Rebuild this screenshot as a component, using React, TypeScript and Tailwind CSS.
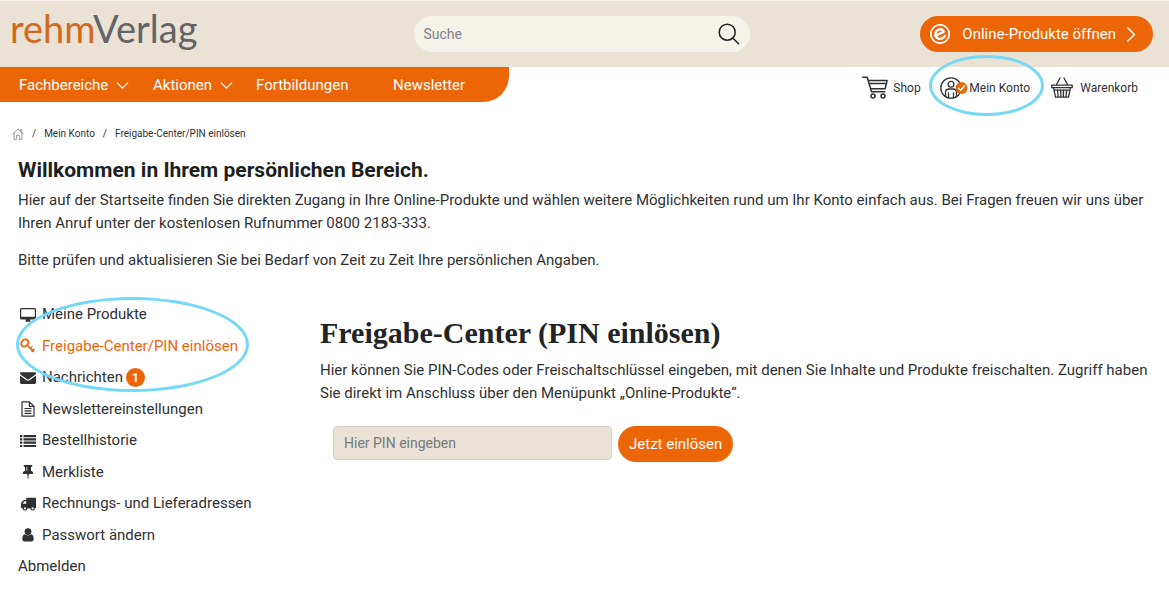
import type { ReactNode } from 'react';

const Chevron = ({ className }: { className: string }) => (
  <svg viewBox="0 0 14 8" className={className} fill="none" stroke="currentColor" strokeWidth="1.4" strokeLinecap="round" strokeLinejoin="round" aria-hidden="true">
    <path d="M1 1l6 6 6-6" />
  </svg>
);

const HomeIcon = () => (
  <svg viewBox="0 0 12 12" className="size-3 text-[#8a8f94]" fill="none" stroke="currentColor" strokeWidth="0.9" strokeLinejoin="round" strokeLinecap="round" aria-hidden="true">
    <path d="M.8 6L6 .9 11.200 6M2.100 5v6.400h2.500V7.500h2.800v3.900h2.500V5M8.800 3.300V1.500h1.100v2.800" />
  </svg>
);

const SearchIcon = () => (
  <svg viewBox="0 0 22 22" className="size-[22px]" fill="none" stroke="currentColor" strokeWidth="1.500" strokeLinecap="round" aria-hidden="true">
    <circle cx="9.200" cy="9.200" r="8" />
    <path d="M14.900 15.200l5.800 5.500" />
  </svg>
);

const EbookIcon = () => (
  <svg viewBox="0 0 20 20" className="size-5" aria-hidden="true">
    <circle cx="10" cy="10" r="9.200" fill="none" stroke="#fff" strokeWidth="1.700" />
    <path d="M5.200 11.900L13.900 7.700C12.900 5.700 10.700 4.800 8.500 5.600 5.900 6.600 4.700 9.400 5.700 12c1.100 2.500 3.900 3.500 6.400 2.400 1.300-.6 2.300-1.500 2.900-2.600" fill="none" stroke="#fff" strokeWidth="2.300" strokeLinecap="round" strokeLinejoin="round" />
  </svg>
);

const CartIcon = () => (
  <svg viewBox="0 0 26 23" className="h-[23px] w-[26px]" fill="none" stroke="currentColor" strokeWidth="1.500" strokeLinejoin="round" strokeLinecap="round" aria-hidden="true">
    <path d="M.8 1.200h4.400l4.300 14.500h13.300M6.200 4.600h18.900l-2 8.200H8.600M6.900 7.600h17.400" />
    <circle cx="11" cy="20" r="2" />
    <circle cx="21" cy="20" r="2" />
  </svg>
);

const AccountIcon = () => (
  <svg viewBox="0 0 28 22" className="h-[22px] w-7" fill="none" stroke="currentColor" strokeWidth="1.300" strokeLinecap="round" strokeLinejoin="round" aria-hidden="true">
    <circle cx="11" cy="11" r="10.200" />
    <circle cx="11" cy="7.300" r="2.900" />
    <path d="M5.500 19.200v-3.700c0-2 1.600-3.500 3.500-3.500h4c2 0 3.500 1.500 3.500 3.500v3.700M8.500 20.500v-4.700M13.500 20.500v-4.700" />
    <circle cx="21.500" cy="11" r="6" fill="#ec6608" stroke="none" />
    <path d="M18.700 11.200l2 2 3.700-4.300" stroke="#fff" strokeWidth="1.500" />
  </svg>
);

const BasketIcon = () => (
  <svg viewBox="0 0 22 21" className="h-[21px] w-[22px]" fill="none" stroke="currentColor" strokeWidth="1.300" strokeLinejoin="round" strokeLinecap="round" aria-hidden="true">
    <path d="M.8 8.200h20.400v2.500H.8zM2.500 10.700l2 9.500h13l2-9.500M5.300 8L9 1M16.700 8L13 1M6.500 13l.7 7M9.700 13l.2 7M12.500 13l-.2 7M15.600 13l-.7 7M3.200 13.200h15.700" />
  </svg>
);

const MenuSvg = ({ children }: { children: ReactNode }) => (
  <svg viewBox="0 0 16 16" className="size-4 shrink-0" fill="currentColor" aria-hidden="true">
    {children}
  </svg>
);

const desktop = (
  <MenuSvg>
    <path fillRule="evenodd" d="M1.300 1h13.400A1.300 1.300 0 0116 2.300v9a1.300 1.300 0 01-1.300 1.300H10c0 .7.500 1.100.5 1.600 0 .4-.3.600-.6.600H6c-.3 0-.6-.2-.6-.6 0-.5.500-.9.500-1.600H1.300A1.300 1.300 0 010 11.300v-9A1.300 1.300 0 011.300 1zM1.200 2.200v7.600h13.600V2.200z" />
  </MenuSvg>
);
const key = (
  <MenuSvg>
    <g fill="none" stroke="currentColor" strokeLinecap="round">
      <ellipse cx="4.800" cy="5" rx="3.900" ry="3.100" transform="rotate(-40 4.800 5)" strokeWidth="1.900" />
      <path d="M7.500 7.500l5.800 6M11.800 9.200l-1.500 1.500M14 11.300l-1.900 1.900" strokeWidth="1.700" />
    </g>
  </MenuSvg>
);
const mail = (
  <MenuSvg>
    <path d="M.8 2.300h14.400c.5 0 .8.300.8.800 0 .9-.7 1.700-1.500 2.200L9.200 9c-.8.500-1.600.5-2.400 0L1.500 5.300C.7 4.800 0 4 0 3.100c0-.5.300-.8.800-.8z" />
    <path d="M0 5.600l6 4.300c1.300.9 2.700.9 4 0l6-4.300v6.900c0 .8-.6 1.400-1.400 1.400H1.400c-.8 0-1.400-.6-1.400-1.400z" />
  </MenuSvg>
);
const file = (
  <MenuSvg>
    <g fill="none" stroke="currentColor" strokeWidth="1.200" strokeLinejoin="round">
      <path d="M2 .8h7.500L14 5.300v9.900H2zM9.400.8v4.600H14" />
      <path d="M4.500 7.500h7M4.500 9.900h7M4.500 12.300h7" />
    </g>
  </MenuSvg>
);
const list = (
  <MenuSvg>
    <path d="M0 2h2.300v2.200H0zM3.500 2H16v2.200H3.500zM0 5.300h2.300v2.200H0zM3.500 5.300H16v2.200H3.500zM0 8.600h2.300v2.200H0zM3.500 8.600H16v2.200H3.500zM0 11.900h2.300v2.200H0zM3.500 11.900H16v2.200H3.500z" />
  </MenuSvg>
);
const pin = (
  <MenuSvg>
    <path d="M4.600 1h6.800c.6 0 1 .4 1 .9s-.4.900-1 .9H11v4c1.400.5 2.200 1.500 2.200 2.700 0 .3-.2.500-.5.500H8.800L8.300 15h-.5L7.300 10h-4c-.3 0-.5-.2-.5-.5 0-1.200.8-2.200 2.200-2.700v-4h-.4c-.6 0-1-.4-1-.9s.4-.9 1-.9zM6.500 3v4h.7V3z" fillRule="evenodd" />
  </MenuSvg>
);
const truck = (
  <MenuSvg>
    <path fillRule="evenodd" d="M6.900 1.800h8.300c.5 0 .8.300.8.700v9.100c0 .5-.4.800-1.200.8a2.200 2.200 0 01-4.400 0H7.200a2.200 2.200 0 01-4.400 0C1.500 12.400 1 12 1 11.500V7.700c0-.5.200-1 .5-1.400l1.700-1.700c.4-.4.800-.6 1.400-.6h1.600V2.500c0-.4.300-.7.700-.7zM2.500 7.700h3.700V5.300H4.600zM5 11.300a1.100 1.100 0 100 2.200 1.100 1.100 0 000-2.200zM12.600 11.300a1.100 1.100 0 100 2.200 1.100 1.100 0 000-2.200z" />
  </MenuSvg>
);
const user = (
  <MenuSvg>
    <circle cx="8" cy="4.600" r="3.400" />
    <path d="M4.900 7.300c1.900 1.500 4.300 1.500 6.200 0 2 .3 2.600 2.500 2.600 4.600 0 1.500-.9 2.500-2.200 2.500h-7c-1.300 0-2.200-1-2.200-2.500 0-2.100.6-4.300 2.600-4.600z" />
  </MenuSvg>
);

type Entry = { label: string; icon?: ReactNode; active?: boolean; badge?: number };

const entries: Entry[] = [
  { label: 'Meine Produkte', icon: desktop },
  { label: 'Freigabe-Center/PIN einlösen', icon: key, active: true },
  { label: 'Nachrichten', icon: mail, badge: 1 },
  { label: 'Newslettereinstellungen', icon: file },
  { label: 'Bestellhistorie', icon: list },
  { label: 'Merkliste', icon: pin },
  { label: 'Rechnungs- und Lieferadressen', icon: truck },
  { label: 'Passwort ändern', icon: user },
  { label: 'Abmelden' },
];

export default function App() {
  return (
    <div className="min-h-screen bg-white font-['Roboto',sans-serif] text-[15px] leading-[23px] text-[#2f3133]">
      <header>
        <div className="grid h-[67px] grid-cols-[1fr_336px_1fr] items-center border-t border-[#f4f1ea] bg-[#e9e2d5] pr-4 pl-[10px]">
          <a href="#start" className="pb-3 font-['Lato',sans-serif] text-[38px] leading-[48px] text-[#636466]">
            <span className="text-[#d2691e]">rehm</span>Verlag
          </a>
          <form className="flex h-9 items-center rounded-full bg-[#f5f2ea] pr-[10px]" role="search">
            <input type="search" aria-label="Suche" placeholder="Suche" className="h-full min-w-0 flex-1 rounded-full bg-transparent px-[10px] text-sm outline-none placeholder:text-[#7d8286]" />
            <button type="button" aria-label="Suchen" className="text-[#222]">
              <SearchIcon />
            </button>
          </form>
          <a href="#produkte" className="flex h-9 items-center justify-self-end rounded-full bg-[#ec6608] pr-[14px] pl-[10px] text-white">
            <EbookIcon />
            <span className="pr-[7px] pl-3">Online-Produkte öffnen</span>
            <Chevron className="h-[9px] w-4 -rotate-90" />
          </a>
        </div>
        <div className="flex justify-between">
          <nav aria-label="Hauptmenü" className="flex h-[35px] w-[509px] items-center rounded-br-[26px] bg-[#ec6608] pt-[2px] pl-[19px] text-white">
            <button type="button" className="flex w-[134px] items-center gap-2">
              Fachbereiche
              <Chevron className="h-[7px] w-[13px]" />
            </button>
            <button type="button" className="flex w-[103px] items-center gap-2">
              Aktionen
              <Chevron className="h-[7px] w-[13px]" />
            </button>
            <a href="#fortbildungen" className="w-[137px]">Fortbildungen</a>
            <a href="#newsletter">Newsletter</a>
          </nav>
          <nav aria-label="Konto" className="flex items-center pt-[6px] pr-[31px] text-xs">
            <a href="#shop" className="flex w-[78px] items-center gap-[5px]">
              <CartIcon />
              Shop
            </a>
            <a href="#konto" className="relative flex w-[111px] items-center gap-[1px]">
              <AccountIcon />
              Mein Konto
              <span className="pointer-events-none absolute -top-[22px] -left-[11px] h-[61px] w-[115px] rounded-[50%] border-3 border-[#74d8f7]" />
            </a>
            <a href="#warenkorb" className="flex items-center gap-[7px]">
              <BasketIcon />
              Warenkorb
            </a>
          </nav>
        </div>
      </header>

      <main className="px-[18px]">
        <nav aria-label="Brotkrumen" className="-ml-[6px] flex items-center gap-2 pt-5 text-[10px]">
          <a href="#start" aria-label="Startseite"><HomeIcon /></a>
          <span>/</span>
          <a href="#konto">Mein Konto</a>
          <span>/</span>
          <span>Freigabe-Center/PIN einlösen</span>
        </nav>

        <h1 className="pt-[11px] text-[21px] leading-7 font-bold text-[#1d1f20]">Willkommen in Ihrem persönlichen Bereich.</h1>
        <p className="pt-[5px]">
          Hier auf der Startseite finden Sie direkten Zugang in Ihre Online-Produkte und wählen weitere Möglichkeiten rund um Ihr Konto einfach aus. Bei Fragen freuen wir uns über Ihren Anruf unter der kostenlosen Rufnummer 0800 2183-333.
        </p>
        <p className="pt-[14px]">Bitte prüfen und aktualisieren Sie bei Bedarf von Zeit zu Zeit Ihre persönlichen Angaben.</p>

        <div className="flex pt-[27px]">
          <aside className="w-[302px] shrink-0">
            <ul className="relative">
              {entries.map((entry) => (
                <li key={entry.label} className="flex odd:h-[31px] even:h-8">
                  <a href={'#' + entry.label} className={entry.active ? 'flex items-center gap-[6px] pl-[2px] text-[#ec6608]' : entry.icon ? 'flex items-center gap-[6px] pl-[2px]' : 'flex items-center'}>
                    {entry.icon}
                    {entry.label}
                    {entry.badge && (
                      <span className="-ml-[3px] flex size-[19px] items-center justify-center rounded-full bg-[#ec6608] text-xs font-bold text-white">{entry.badge}</span>
                    )}
                  </a>
                </li>
              ))}
              <li aria-hidden="true" className="pointer-events-none absolute -top-[2px] -left-[2px] h-[95px] w-[233px] rounded-[50%] border-3 border-[#74d8f7]" />
            </ul>
          </aside>
          <section className="min-w-0 flex-1 pt-4">
            <h2 className="font-['Liberation_Serif',serif] text-[30px] leading-9 font-bold text-[#222425]">Freigabe-Center (PIN einlösen)</h2>
            <p className="pt-2">
              Hier können Sie PIN-Codes oder Freischaltschlüssel eingeben, mit denen Sie Inhalte und Produkte freischalten. Zugriff haben Sie direkt im Anschluss über den Menüpunkt „Online-Produkte“.
            </p>
            <form className="flex items-start gap-[6px] pt-[21px] pl-[13px]">
              <input type="text" aria-label="PIN" placeholder="Hier PIN eingeben" className="h-[34px] w-[279px] rounded-[4px] border border-[#d3d1cc] bg-[#e9e2d5] px-[10px] text-sm placeholder:text-[#757a7d]" />
              <button type="button" className="h-9 rounded-full bg-[#ec6608] px-[11px] text-white">Jetzt einlösen</button>
            </form>
          </section>
        </div>
      </main>
    </div>
  );
}
